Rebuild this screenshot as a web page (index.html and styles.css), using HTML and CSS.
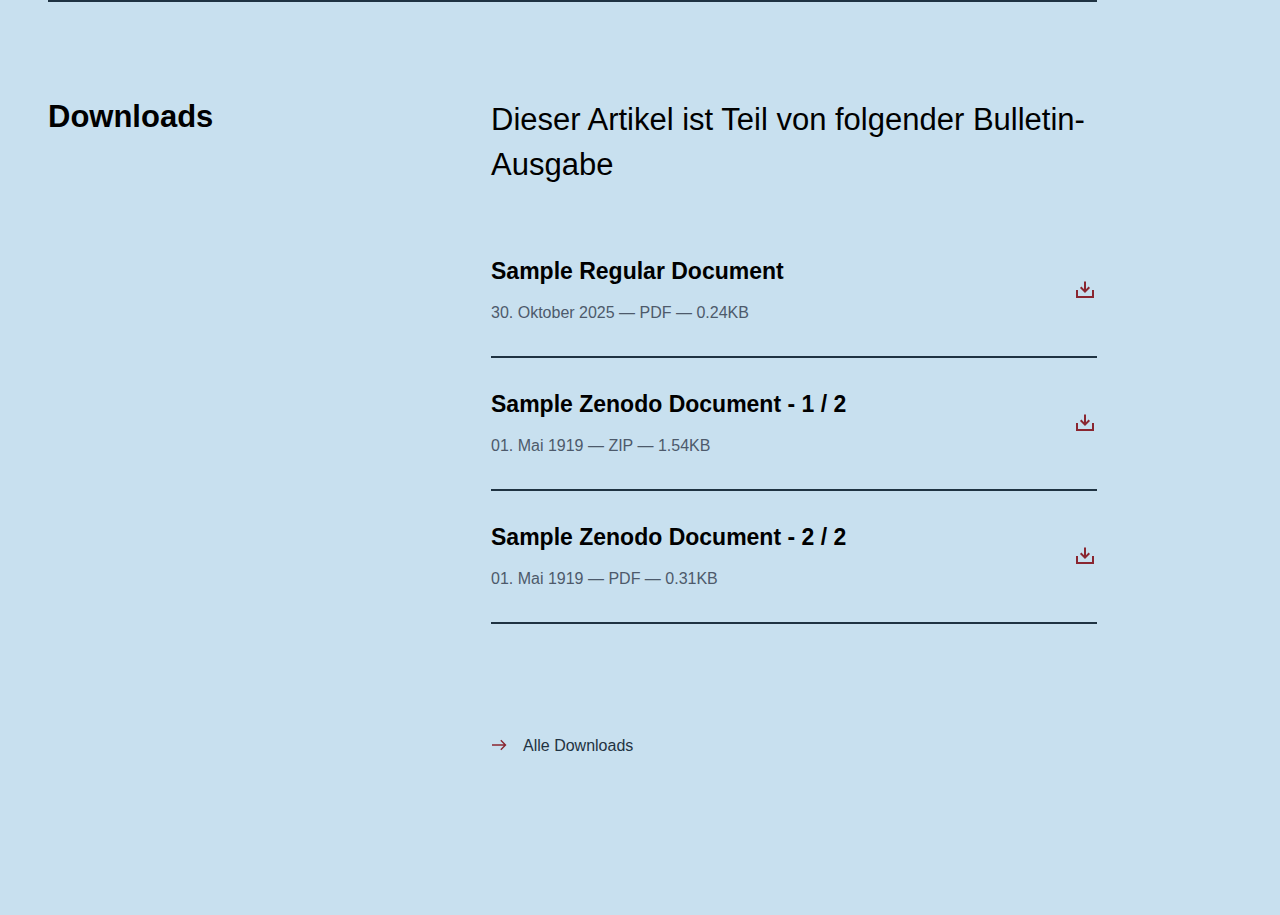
FILE: index.html
```
<!DOCTYPE html>
<html lang="de">
<head>
<meta charset="utf-8">
<meta name="viewport" content="width=device-width, initial-scale=1">
<title>Downloads</title>
<link rel="stylesheet" href="styles.css">
</head>
<body>
<svg width="0" height="0" class="sprite" aria-hidden="true">
  <symbol id="download" viewBox="0 0 24 24"><path d="M4 12v7h16v-7M12 3.500v10.500M7.700 9.300l4.300 4.300 4.300-4.300" fill="none" stroke="currentColor" stroke-width="2"/></symbol>
</svg>
<main class="page">
  <section class="downloads">
    <h2 class="title">Downloads</h2>
    <div class="content">
      <p class="intro">Dieser Artikel ist Teil von folgender Bulletin-Ausgabe</p>
      <ul class="list">
        <li><a class="item" href="#"><span class="text"><span class="name">Sample Regular Document</span><span class="meta">30. Oktober 2025 — PDF — 0.24KB</span></span><svg class="icon" aria-hidden="true"><use href="#download"/></svg></a></li>
        <li><a class="item" href="#"><span class="text"><span class="name">Sample Zenodo Document - 1 / 2</span><span class="meta">01. Mai 1919 — ZIP — 1.54KB</span></span><svg class="icon" aria-hidden="true"><use href="#download"/></svg></a></li>
        <li><a class="item" href="#"><span class="text"><span class="name">Sample Zenodo Document - 2 / 2</span><span class="meta">01. Mai 1919 — PDF — 0.31KB</span></span><svg class="icon" aria-hidden="true"><use href="#download"/></svg></a></li>
      </ul>
      <a class="all" href="#"><svg class="arrow" viewBox="0 0 16 16" aria-hidden="true"><path d="M1 7h13.500M9.800 2.300l4.700 4.700-4.700 4.700" fill="none" stroke="currentColor" stroke-width="1.400"/></svg>Alle Downloads</a>
    </div>
  </section>
</main>
</body>
</html>
```
FILE: styles.css
```
* { box-sizing: border-box; }
body { margin: 0; background: #c8e0ef; color: #000; font-family: "Liberation Sans", Arial, sans-serif; font-size: 16px; line-height: 24px; }
.sprite { display: block; }
.page { max-width: 1097px; padding-left: 48px; }
.downloads { display: grid; grid-template-columns: 443px 1fr; border-top: 2px solid #1f3342; padding-top: 95px; padding-bottom: 96px; }
.title { margin: 0; font-size: 31px; line-height: 40px; font-weight: 700; }
.intro { margin: 0; font-size: 31px; line-height: 45px; }
.list { list-style: none; margin: 38px 0 0; padding: 0; }
.item { display: flex; align-items: center; justify-content: space-between; padding: 30px 0 31px; border-bottom: 2px solid #1f3342; color: #000; text-decoration: none; }
.text { display: flex; flex-direction: column; gap: 14px; }
.name { font-size: 23px; line-height: 32px; font-weight: 700; }
.meta { color: #4d5a6b; }
.icon { width: 24px; height: 24px; color: #8a2630; }
.all { display: inline-flex; align-items: center; gap: 16px; margin-top: 110px; color: #1f3342; text-decoration: none; }
.arrow { width: 16px; height: 16px; color: #8a2630; }
```
